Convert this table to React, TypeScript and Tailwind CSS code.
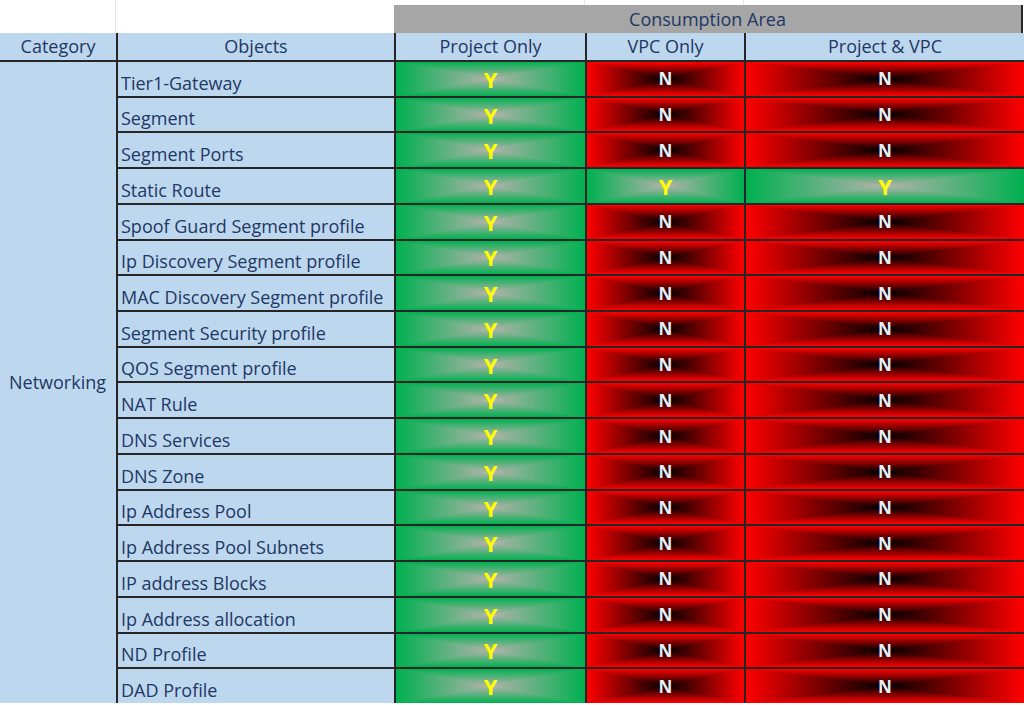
const objects = [
  "Tier1-Gateway",
  "Segment",
  "Segment Ports",
  "Static Route",
  "Spoof Guard Segment profile",
  "Ip Discovery Segment profile",
  "MAC Discovery Segment profile",
  "Segment Security profile",
  "QOS Segment profile",
  "NAT Rule",
  "DNS Services",
  "DNS Zone",
  "Ip Address Pool",
  "Ip Address Pool Subnets",
  "IP address Blocks",
  "Ip Address allocation",
  "ND Profile",
  "DAD Profile",
];

const green =
  "bg-[linear-gradient(to_right,#00b050,#b4b2aa_50%,#00b050),linear-gradient(to_bottom,#00b050,#b4b2aa_50%,#00b050)] bg-blend-darken";
const red =
  "bg-[linear-gradient(to_right,#ff0000,#000000_50%,#ff0000),linear-gradient(to_bottom,#ff0000,#000000_50%,#ff0000)] bg-blend-lighten";

function Mark({ yes }: { yes: boolean }) {
  return yes ? (
    <div className={`flex items-center justify-center ${green}`}>
      <span className="text-[22px] leading-none font-bold text-[#ffff00]">Y</span>
    </div>
  ) : (
    <div className={`flex items-center justify-center ${red}`}>
      <span className="text-[17px] leading-none font-bold text-[#e6eef8]">N</span>
    </div>
  );
}

export default function App() {
  return (
    <div
      className="w-[1024px] h-[705px] bg-white text-[#1f3864] overflow-hidden"
      style={{ fontFamily: '"Open Sans", "Liberation Sans", sans-serif' }}
    >
      {/* top strip with the merged Consumption Area header */}
      <div className="flex h-[33px]">
        <div className="w-[116px] border-r border-[#efe4e4]" />
        <div className="w-[278px]" />
        <div className="flex-1 flex flex-col">
          <div className="h-[5px] flex">
            <div className="w-[191px] border-r border-[#efe4e4]" />
            <div className="w-[159px] border-r border-[#efe4e4]" />
          </div>
          <div className="flex-1 mr-[1px] bg-[#a6a6a6] border-r-2 border-[#262626] flex items-center justify-center text-[18px]">
            Consumption Area
          </div>
        </div>
      </div>

      {/* table body */}
      <div className="grid grid-cols-[116px_276px_189px_157px_278px] grid-rows-[27px_repeat(18,1fr)] gap-[2px] h-[670px] bg-[#262626] text-[18px]">
        <div className="bg-[#bdd7ee] flex items-center justify-center">Category</div>
        <div className="bg-[#bdd7ee] flex items-center justify-center">Objects</div>
        <div className="bg-[#bdd7ee] flex items-center justify-center">Project Only</div>
        <div className="bg-[#bdd7ee] flex items-center justify-center">VPC Only</div>
        <div className="bg-[#bdd7ee] flex items-center justify-center">Project &amp; VPC</div>

        <div className="row-span-18 bg-[#bdd7ee] flex items-center pl-[9px]">Networking</div>
        {objects.map((name) => {
          const all = name === "Static Route";
          return (
            <div key={name} className="contents">
              <div className="bg-[#bdd7ee] flex items-end pl-[3px] pb-[1px] leading-[24px] whitespace-nowrap">
                {name}
              </div>
              <Mark yes />
              <Mark yes={all} />
              <Mark yes={all} />
            </div>
          );
        })}
      </div>
    </div>
  );
}
